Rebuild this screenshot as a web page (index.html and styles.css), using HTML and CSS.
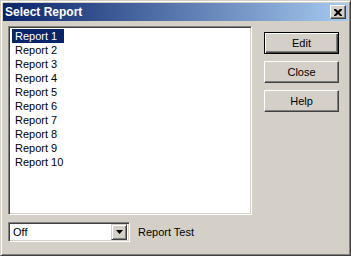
FILE: index.html
```html
<!DOCTYPE html>
<html lang="en">
  <head>
    <meta charset="UTF-8" />
    <title>Select Report</title>
    <link rel="stylesheet" href="styles.css">
  </head>
  <body>
    <div class="window">
      <div class="titlebar">
        <span class="title">Select Report</span>
        <button class="close-btn" aria-label="Close">
          <svg width="8" height="7" viewBox="0 0 8 7">
            <path d="M0 0h2l2 2 2-2h2v1l-2.5 2.5L8 6v1H6L4 5 2 7H0V6l2.5-2.5L0 1z" fill="#000"/>
          </svg>
        </button>
      </div>

      <div class="content">
        <div class="main-row">
          <div class="listbox">
            <div class="item selected">Report 1</div>
            <div class="item">Report 2</div>
            <div class="item">Report 3</div>
            <div class="item">Report 4</div>
            <div class="item">Report 5</div>
            <div class="item">Report 6</div>
            <div class="item">Report 7</div>
            <div class="item">Report 8</div>
            <div class="item">Report 9</div>
            <div class="item">Report 10</div>
          </div>

          <div class="buttons">
            <button class="btn default">Edit</button>
            <button class="btn">Close</button>
            <button class="btn">Help</button>
          </div>
        </div>

        <div class="bottom-row">
          <div class="combo">
            <span class="combo-value">Off</span>
            <span class="combo-arrow">
              <svg width="7" height="4" viewBox="0 0 7 4"><path d="M0 0h7L3.5 4z" fill="#000"/></svg>
            </span>
          </div>
          <span class="label">Report Test</span>
        </div>
      </div>
    </div>
  </body>
</html>
```

FILE: styles.css
```css
body {
  margin: 0;
  font-family: "Liberation Sans", Arial, sans-serif;
  font-size: 11px;
  background-color: #d4d0c8;
}
.window {
  box-sizing: border-box;
  width: 351px;
  height: 256px;
  background-color: #d4d0c8;
  border: 1px solid;
  border-color: #d4d0c8 #404040 #404040 #d4d0c8;
  box-shadow: inset 1px 1px #fff, inset -1px -1px #808080;
  padding: 2px;
}
.titlebar {
  height: 18px;
  display: flex;
  align-items: center;
  justify-content: space-between;
  background: linear-gradient(to right, #0a246a, #a6caf0);
  padding: 0 2px 0 2px;
}
.title {
  color: #fff;
  font-weight: bold;
  font-size: 12px;
}
.close-btn {
  box-sizing: border-box;
  width: 16px;
  height: 14px;
  padding: 0;
  background-color: #d4d0c8;
  border: 1px solid;
  border-color: #fff #404040 #404040 #fff;
  box-shadow: inset -1px -1px #808080;
  display: flex;
  align-items: center;
  justify-content: center;
}
.content {
  padding: 5px 0 0 5px;
}
.main-row {
  display: flex;
  align-items: flex-start;
}
.listbox {
  box-sizing: border-box;
  width: 244px;
  height: 189px;
  background-color: #fff;
  border: 1px solid;
  border-color: #808080 #fff #fff #808080;
  box-shadow: inset 1px 1px #404040, inset -1px -1px #d4d0c8;
  padding: 2px 3px;
  color: #000;
}
.item {
  height: 14px;
  line-height: 14px;
  padding: 0 2px 0 3px;
  width: fit-content;
}
.item.selected {
  background-color: #0a246a;
  color: #fff;
  padding-right: 7px;
}
.buttons {
  display: flex;
  flex-direction: column;
  gap: 7px;
  margin: 6px 0 0 12px;
}
.btn {
  box-sizing: border-box;
  width: 75px;
  height: 22px;
  padding: 0;
  font-family: "Liberation Sans", Arial, sans-serif;
  font-size: 11px;
  color: #000;
  background-color: #d4d0c8;
  border: 1px solid;
  border-color: #fff #404040 #404040 #fff;
  box-shadow: inset -1px -1px #808080;
}
.btn.default {
  border: 1px solid #000;
  box-shadow: inset 1px 1px #fff, inset -1px -1px #404040, inset -2px -2px #808080;
}
.bottom-row {
  display: flex;
  align-items: center;
  margin-top: 7px;
}
.combo {
  box-sizing: border-box;
  width: 122px;
  height: 20px;
  display: flex;
  align-items: center;
  justify-content: space-between;
  background-color: #fff;
  border: 1px solid;
  border-color: #808080 #fff #fff #808080;
  box-shadow: inset 1px 1px #404040, inset -1px -1px #d4d0c8;
  padding: 2px;
}
.combo-value {
  padding-left: 2px;
}
.combo-arrow {
  box-sizing: border-box;
  width: 16px;
  height: 16px;
  display: flex;
  align-items: center;
  justify-content: center;
  background-color: #d4d0c8;
  border: 1px solid;
  border-color: #d4d0c8 #404040 #404040 #d4d0c8;
  box-shadow: inset 1px 1px #fff, inset -1px -1px #808080;
}
.label {
  margin-left: 8px;
  color: #000;
}
```
